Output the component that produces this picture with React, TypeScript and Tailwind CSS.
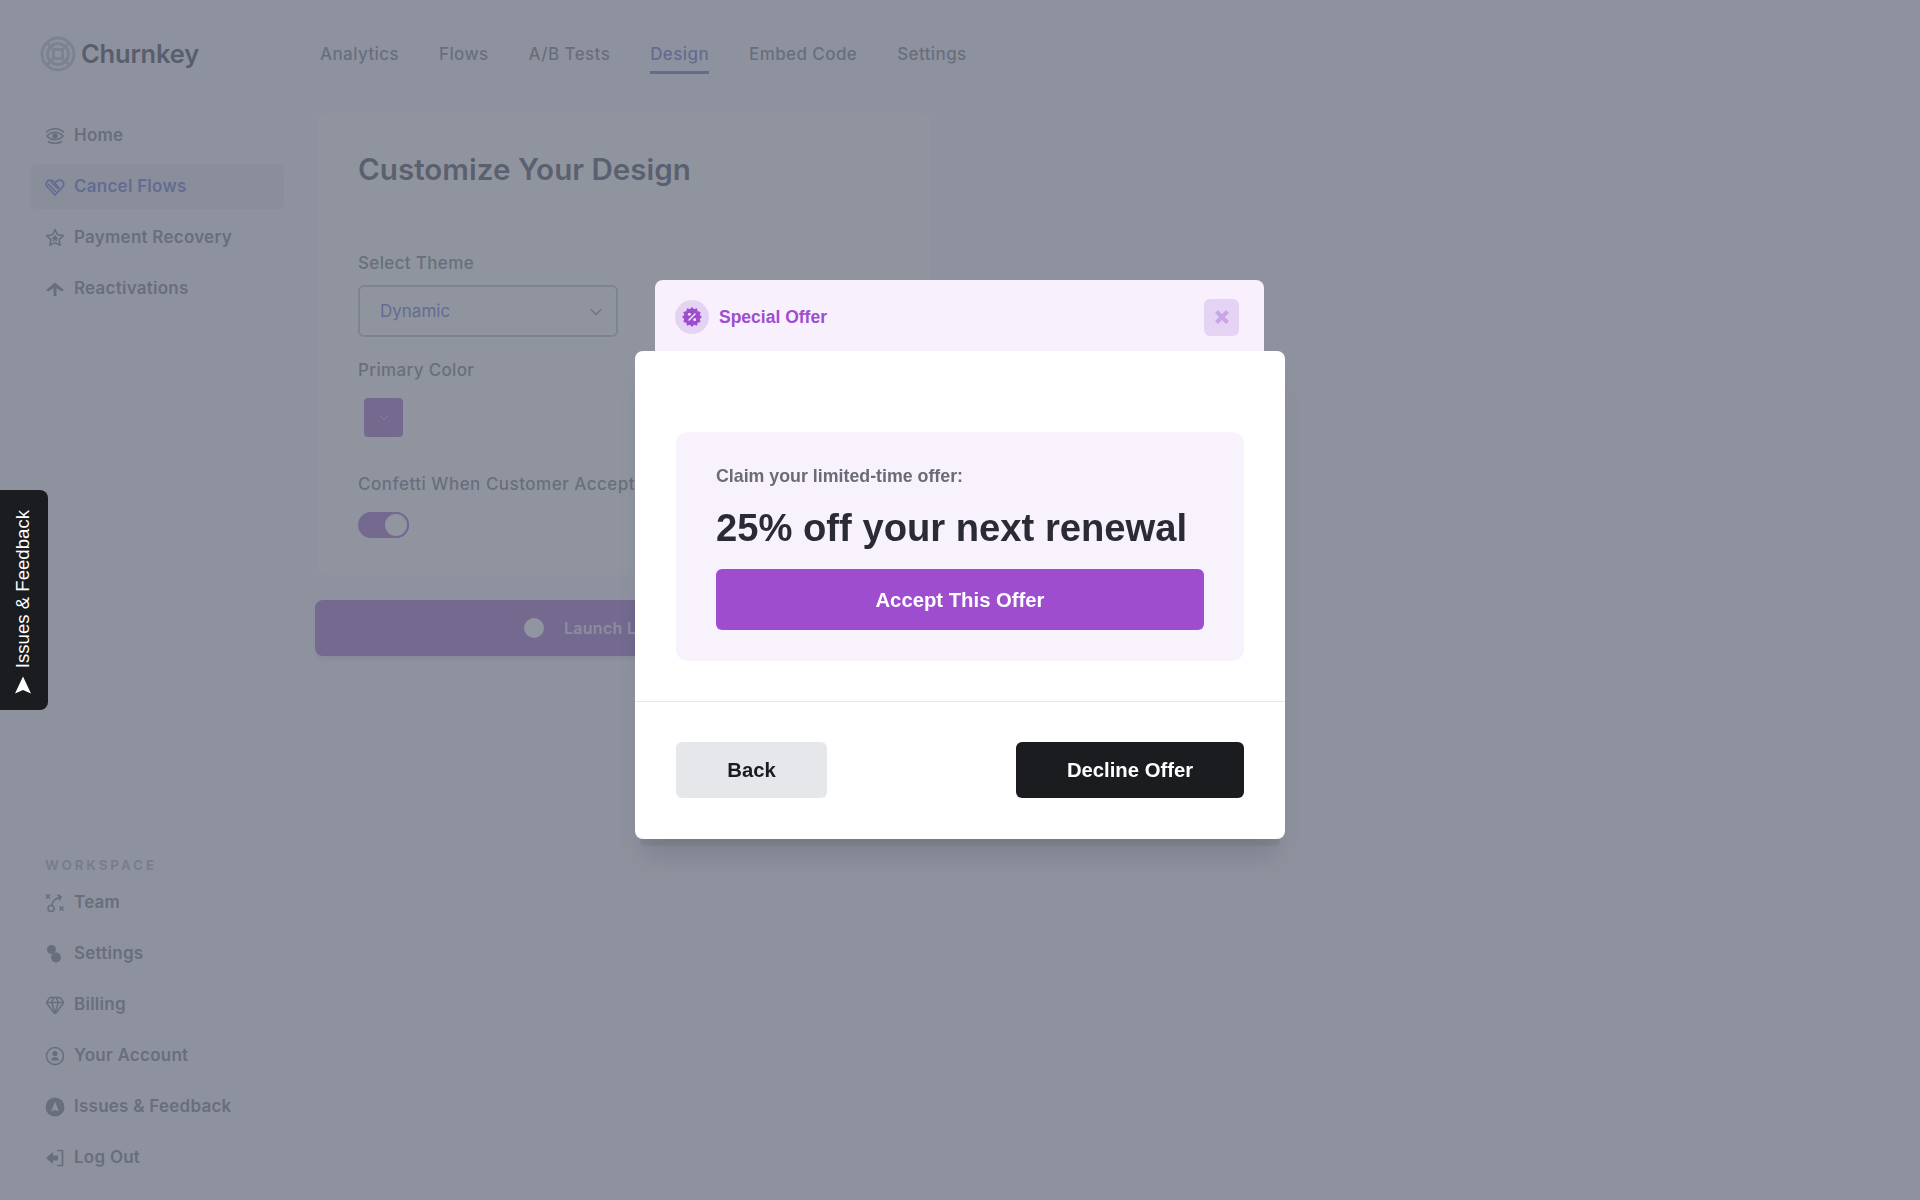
import React from "react";
import { ChevronDown, Gem } from "lucide-react";

const burst = (cx: number, cy: number, r1: number, r2: number, n: number) => {
  const pts: string[] = [];
  for (let i = 0; i < n * 2; i++) {
    const a = (Math.PI * i) / n;
    const r = i % 2 ? r2 : r1;
    pts.push(`${(cx + r * Math.sin(a)).toFixed(2)},${(cy - r * Math.cos(a)).toFixed(2)}`);
  }
  return pts.join(" ");
};

const HomeIcon = () => (
  <svg width="20" height="20" viewBox="0 0 20 20" fill="none" stroke="currentColor" strokeWidth="1.6">
    <path d="M1 6.5C4 3.6 7 2.8 10 2.8s6 .8 9 3.7" />
    <path d="M2 10c2.500-2.700 5-3.700 8-3.700s5.500 1 8 3.700c-2.500 2.700-5 3.700-8 3.700s-5.500-1-8-3.700z" />
    <circle cx="10" cy="10" r="2" fill="currentColor" />
    <path d="M3 15.500c2.200 1.300 4.500 1.800 7 1.800s4.800-.5 7-1.800" />
  </svg>
);

const HeartIcon = () => (
  <svg width="20" height="20" viewBox="0 0 20 20" fill="none" stroke="currentColor" strokeWidth="1.7">
    <path d="M10 18L2.200 9.800C.3 7.600 1.500 3.200 5.200 3.200c2 0 3.600 1.100 4.800 2.800 1.200-1.700 2.800-2.800 4.800-2.800 3.700 0 4.900 4.400 3 6.600L10 18z" />
    <path d="M3 7l8 8M5.500 4.500l8 8M9.500 6l5 5" />
  </svg>
);

const StarIcon = () => (
  <svg width="20" height="20" viewBox="0 0 20 20" fill="none" stroke="currentColor" strokeWidth="1.6" strokeLinejoin="round">
    <path d="M10 1.500l2.500 5.300 5.800.8-4.200 4 1 5.700-5.100-2.700-5.100 2.700 1-5.700-4.200-4 5.800-.8z" />
    <path d="M10 6.500l1.100 2.400 2.500.3-1.800 1.700.5 2.500-2.300-1.200-2.300 1.200.5-2.500-1.800-1.700 2.500-.3z" fill="currentColor" stroke="none" />
  </svg>
);

const UpIcon = () => (
  <svg width="20" height="20" viewBox="0 0 20 20" fill="currentColor">
    <path d="M10 3.500l9 7.500-2.500 1.500L11.500 9v8h-3V9l-5 3.500L1 11z" />
  </svg>
);

const TeamIcon = () => (
  <svg width="20" height="20" viewBox="0 0 20 20" fill="none" stroke="currentColor" strokeWidth="1.600">
    <path d="M1 1.500l4 4M5 1.500l-4 4M14.500 13.500l4 4M18.500 13.500l-4 4" />
    <circle cx="6" cy="15.500" r="3" />
    <path d="M7 12c0-3 3-6 8-8M12.500 1.800L16 3.800l-1.800 3.500" />
  </svg>
);

const BlobsIcon = () => (
  <svg width="20" height="20" viewBox="0 0 20 20" fill="currentColor">
    <circle cx="6.500" cy="5.500" r="4.500" />
    <circle cx="11" cy="13.500" r="5" />
  </svg>
);

const AccountIcon = () => (
  <svg width="20" height="20" viewBox="0 0 20 20" fill="none" stroke="currentColor" strokeWidth="1.600">
    <circle cx="10" cy="10" r="8.500" />
    <circle cx="10" cy="7.500" r="1.800" fill="currentColor" />
    <path d="M6 14.500c.5-2.500 2-3.500 4-3.500s3.500 1 4 3.500z" fill="currentColor" stroke="none" />
  </svg>
);

const IssueIcon = () => (
  <svg width="20" height="20" viewBox="0 0 20 20">
    <circle cx="10" cy="10" r="9.500" fill="currentColor" />
    <path d="M10 4.500l3.800 10L10 13l-3.800 1.500z" fill="#f8f5f8" />
  </svg>
);

const LogOutIcon = () => (
  <svg width="20" height="20" viewBox="0 0 20 20">
    <path d="M1 10l7-6v3.500h5v5H8V16z" fill="currentColor" />
    <path d="M12 2.500h5.500v15H12" fill="none" stroke="currentColor" strokeWidth="1.700" />
  </svg>
);

const LogoIcon = () => (
  <svg width="36" height="36" viewBox="0 0 36 36" fill="none" stroke="#b3b5c0" strokeWidth="3">
    <circle cx="18" cy="18" r="16" />
    <circle cx="18" cy="18" r="10.500" />
    <rect x="13.500" y="13.500" width="9" height="9" rx="1.500" />
    <path d="M6 6l8 8M30 6l-8 8M6 30l8-8M30 30l-8-8" strokeWidth="2.500" />
  </svg>
);

const SideRow = ({ icon, label, active }: { icon: React.ReactNode; label: string; active?: boolean }) => (
  <div
    className={`flex h-[45px] items-center gap-[9px] rounded-md px-[14px] text-[17px] font-semibold tracking-[0.25px] ${
      active ? "bg-[#e6e3ec] text-[#4f58c8]" : "text-[#5f6370]"
    }`}
  >
    <span className="flex h-5 w-5 shrink-0 items-center justify-center">{icon}</span>
    <span>{label}</span>
  </div>
);

const tabs = ["Analytics", "Flows", "A/B Tests", "Design", "Embed Code", "Settings"];

export default function App() {
  return (
    <div className="relative h-[1200px] w-[1920px] overflow-hidden bg-[#f8f3f8] font-['Inter',sans-serif]">
      <div className="flex h-full">
        {/* Sidebar */}
        <aside className="flex h-full w-[315px] shrink-0 flex-col pb-5 pl-[31px] pr-[31px]">
          <div className="mt-9 flex h-[36px] items-center gap-[5px] pl-[9px]">
            <LogoIcon />
            <span className="text-[25.500px] font-semibold tracking-[-0.2px] text-[#1f2433]">Churnkey</span>
          </div>
          <nav className="mt-[41px] flex flex-col gap-[6px]">
            <SideRow icon={<HomeIcon />} label="Home" />
            <SideRow icon={<HeartIcon />} label="Cancel Flows" active />
            <SideRow icon={<StarIcon />} label="Payment Recovery" />
            <SideRow icon={<UpIcon />} label="Reactivations" />
          </nav>
          <div className="mt-auto">
            <div className="mb-[5px] pl-[14px] text-[13.500px] font-bold tracking-[2.800px] text-[#a0a3ac]">WORKSPACE</div>
            <div className="flex flex-col gap-[6px]">
              <SideRow icon={<TeamIcon />} label="Team" />
              <SideRow icon={<BlobsIcon />} label="Settings" />
              <SideRow icon={<Gem size={20} strokeWidth={1.800} />} label="Billing" />
              <SideRow icon={<AccountIcon />} label="Your Account" />
              <SideRow icon={<IssueIcon />} label="Issues & Feedback" />
              <SideRow icon={<LogOutIcon />} label="Log Out" />
            </div>
          </div>
        </aside>

        {/* Main */}
        <main className="min-w-0 flex-1">
          <div className="flex h-[74px] items-end gap-10 pl-[5px] pt-[36px]">
            {tabs.map((t) => (
              <div
                key={t}
                className={`text-[17px] font-medium tracking-[0.4px] ${
                  t === "Design"
                    ? "border-b-[3px] border-[#4f58c8] pb-1 text-[#4f58c8]"
                    : "mb-[2px] pb-[5px] text-[#62666f]"
                }`}
              >
                {t}
              </div>
            ))}
          </div>
          <section className="ml-[3px] mt-[39px] h-[462px] w-[612px] rounded-lg bg-[#fbfcfc] p-10 pt-[37px]">
            <h1 className="text-[29.600px] font-semibold leading-[38px] text-[#2a2f3d]">Customize Your Design</h1>
            <div className="mt-[63px] text-[17px] font-medium leading-6 tracking-[0.35px] text-[#62666f]">Select Theme</div>
            <div className="mt-[10px] flex h-[52px] w-[260px] items-center justify-between rounded-md border-2 border-[#70747f]/50 pl-5 pr-[10px] pt-[2px] text-[17px] text-[#4f58c8]">
              <span>Dynamic</span>
              <ChevronDown size={20} strokeWidth={1.500} className="text-[#70747f]" />
            </div>
            <div className="mt-[21px] text-[17px] font-medium leading-6 tracking-[0.35px] text-[#62666f]">Primary Color</div>
            <div className="ml-[6px] mt-[16px] flex h-[39px] w-[39px] items-center justify-center rounded-sm bg-[#8f50bb]">
              <ChevronDown size={14} strokeWidth={1.500} className="text-white/70" />
            </div>
            <div className="mt-[35px] whitespace-nowrap text-[17px] font-medium leading-6 tracking-[0.5px] text-[#62666f]">Confetti When Customer Accepts</div>
            <div className="mt-[16px] flex h-[26px] w-[51px] items-center justify-end rounded-full bg-[#8f50bb]">
              <span className="h-[26px] w-[26px] rounded-full border-2 border-[#8f50bb] bg-white" />
            </div>
          </section>
          <div className="mt-[25px] flex h-[56px] w-[618px] items-center justify-center gap-[20px] rounded-lg bg-[#8f50bb] pr-[22px] text-[16px] font-semibold tracking-[0.3px] text-white/80 shadow-md">
            <span className="h-5 w-5 rounded-full bg-white" />
            <span>Launch Live Flow</span>
          </div>
        </main>
      </div>

      {/* Overlay + modal */}
      <div className="absolute inset-0 flex flex-col items-center bg-[#6b7280]/75 pt-[280px] backdrop-blur-[0.7px]">
        <div className="mr-[1px] flex h-[71px] w-[609px] shrink-0 items-center justify-between rounded-t-lg bg-[#f8f0fd] pl-[20px] pr-[25px] pt-[3px] font-['Liberation_Sans',sans-serif]">
          <div className="flex items-center gap-[10px]">
            <span className="flex h-[34px] w-[34px] items-center justify-center rounded-full bg-[#e4d3f3]">
              <svg width="20" height="20" viewBox="0 0 20 20">
                <polygon points={burst(10, 10, 10, 8, 12)} fill="#9f4dcf" />
                <circle cx="7.300" cy="7.300" r="1.400" fill="#f8f0fd" />
                <circle cx="12.700" cy="12.700" r="1.400" fill="#f8f0fd" />
                <path d="M13 7l-6 6" stroke="#f8f0fd" strokeWidth="1.400" strokeLinecap="round" />
              </svg>
            </span>
            <span className="text-[17.500px] font-bold text-[#9f4dcf]">Special Offer</span>
          </div>
          <span className="flex h-[37px] w-[35px] items-center justify-center rounded-md bg-[#e4d3f3]">
            <svg width="16" height="16" viewBox="0 0 16 16">
              <path d="M2.500 2.500l11 11M13.500 2.500l-11 11" stroke="#c9a5e8" strokeWidth="4" />
            </svg>
          </span>
        </div>
        <div className="w-[650px] shrink-0 rounded-lg bg-white font-['Liberation_Sans',sans-serif] shadow-[0_12px_2px_-5px_rgba(0,0,0,0.07),0_26px_24px_-6px_rgba(0,0,0,0.1)]">
          <div className="px-[41px] pb-10 pt-[81px]">
            <div className="h-[229px] rounded-xl bg-[#f8f2fd] px-10 pt-[33px]">
              <div className="text-[17.800px] font-bold leading-[22px] text-[#6b6b76]">Claim your limited-time offer:</div>
              <div className="mt-[18px] whitespace-nowrap text-[38.200px] font-bold leading-[46px] text-[#2b2b36]">25% off your next renewal</div>
              <button className="mt-[18px] h-[61px] w-full rounded-md bg-[#9f4dcf] pt-[2px] text-[20.300px] font-bold text-white">
                Accept This Offer
              </button>
            </div>
          </div>
          <div className="flex justify-between border-t border-[#e5e7eb] px-[41px] pb-[41px] pt-10">
            <button className="h-[56px] w-[151px] rounded-md bg-[#e5e7eb] text-[20.300px] font-bold text-[#1a1c20]">Back</button>
            <button className="h-[56px] w-[228px] rounded-md bg-[#1a1c20] text-[20.300px] font-bold text-white">Decline Offer</button>
          </div>
        </div>
      </div>

      {/* Feedback tab */}
      <div className="absolute left-0 top-[490px] flex h-[220px] w-[48px] flex-col items-center justify-between rounded-r-lg bg-[#1a1c20] pb-4 pr-[2px] pt-5 font-['Liberation_Sans',sans-serif] text-white">
        <span className="rotate-180 text-[18.600px] leading-none [writing-mode:vertical-rl]">Issues &amp; Feedback</span>
        <svg width="18" height="18" viewBox="0 0 18 18" fill="white">
          <path d="M9 0.500L17 17.500 9 14 1 17.500z" />
        </svg>
      </div>
    </div>
  );
}
